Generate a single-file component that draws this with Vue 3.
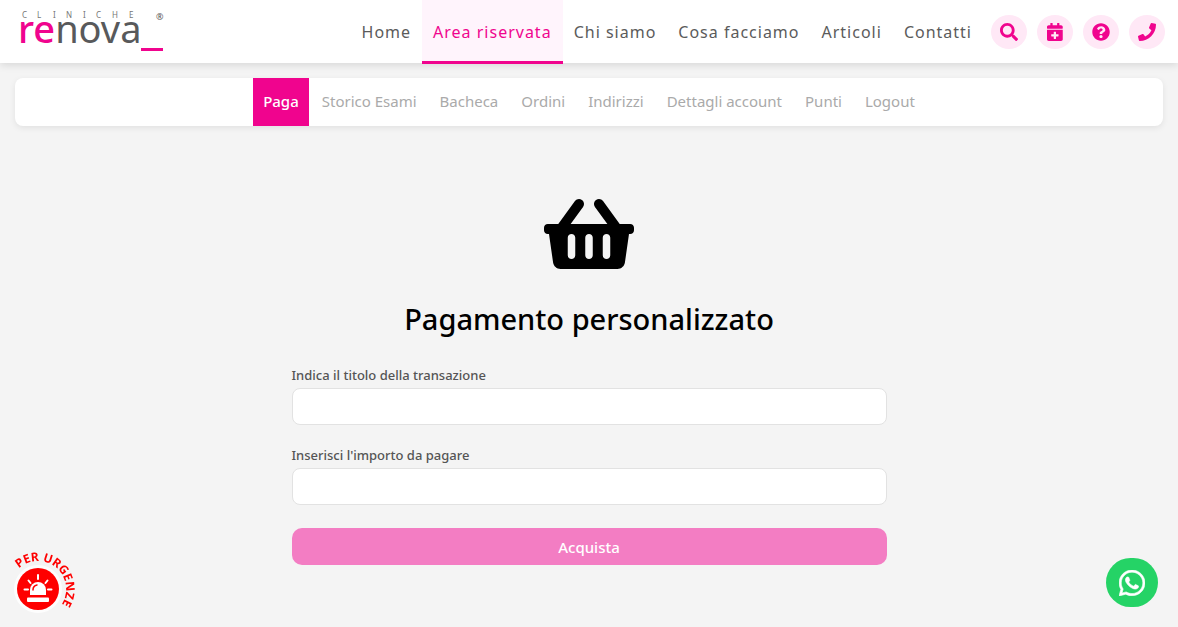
<script setup>
import { ref } from 'vue'

const title = ref('')
const amount = ref('')

const mainMenu = ['Home', 'Area riservata', 'Chi siamo', 'Cosa facciamo', 'Articoli', 'Contatti']
const accountMenu = ['Paga', 'Storico Esami', 'Bacheca', 'Ordini', 'Indirizzi', 'Dettagli account', 'Punti', 'Logout']

const actions = [
  { label: 'Cerca', box: '0 0 512 512', path: 'M505 442.7L405.3 343c-4.5-4.5-10.6-7-17-7H372c27.6-35.3 44-79.7 44-128C416 93.1 322.9 0 208 0S0 93.1 0 208s93.1 208 208 208c48.3 0 92.7-16.4 128-44v16.3c0 6.4 2.5 12.5 7 17l99.7 99.7c9.4 9.4 24.6 9.4 33.9 0l28.3-28.3c9.4-9.4 9.4-24.6.1-34zM208 336c-70.7 0-128-57.2-128-128 0-70.7 57.2-128 128-128 70.7 0 128 57.2 128 128 0 70.7-57.2 128-128 128z' },
  { label: 'Prenota', box: '0 0 448 512', path: 'M436 160H12c-6.6 0-12-5.4-12-12v-36c0-26.5 21.5-48 48-48h48V12c0-6.6 5.4-12 12-12h40c6.6 0 12 5.4 12 12v52h128V12c0-6.6 5.4-12 12-12h40c6.6 0 12 5.4 12 12v52h48c26.5 0 48 21.5 48 48v36c0 6.6-5.4 12-12 12zM12 192h424c6.6 0 12 5.4 12 12v260c0 26.5-21.5 48-48 48H48c-26.5 0-48-21.5-48-48V204c0-6.6 5.4-12 12-12zm316 140c0-6.6-5.4-12-12-12h-60v-60c0-6.6-5.4-12-12-12h-40c-6.6 0-12 5.4-12 12v60h-60c-6.6 0-12 5.4-12 12v40c0 6.6 5.4 12 12 12h60v60c0 6.6 5.4 12 12 12h40c6.6 0 12-5.4 12-12v-60h60c6.6 0 12-5.4 12-12v-40z' },
  { label: 'Aiuto', box: '0 0 512 512', path: 'M504 256c0 136.997-111.043 248-248 248S8 392.997 8 256C8 119.083 119.043 8 256 8s248 111.083 248 248zM262.655 90c-54.497 0-89.255 22.957-116.549 63.758-3.536 5.286-2.353 12.415 2.715 16.258l34.699 26.31c5.205 3.947 12.621 3.008 16.665-2.122 17.864-22.658 30.113-35.797 57.303-35.797 20.429 0 45.698 13.148 45.698 32.958 0 14.976-12.363 22.667-32.534 33.976C247.128 238.528 216 254.941 216 296v4c0 6.627 5.373 12 12 12h56c6.627 0 12-5.373 12-12v-1.333c0-28.462 83.186-29.647 83.186-106.667 0-58.002-60.165-102-116.531-102zM256 338c-25.365 0-46 20.635-46 46 0 25.364 20.635 46 46 46s46-20.636 46-46c0-25.365-20.635-46-46-46z' },
  { label: 'Telefono', box: '0 0 512 512', path: 'M493.4 24.6l-104-24c-11.3-2.6-22.9 3.3-27.5 13.9l-48 112c-4.2 9.8-1.4 21.3 6.9 28l60.6 49.6c-36 76.7-98.9 140.5-177.2 177.2l-49.6-60.6c-6.8-8.3-18.2-11.1-28-6.9l-112 48C3.9 366.5-2 378.1.6 389.4l24 104C27.1 504.2 36.7 512 48 512c256.1 0 464-207.5 464-464 0-11.2-7.7-20.9-18.6-23.4z' }
]
</script>

<template>
  <div class="page">
    <header class="topbar">
      <a class="logo" href="#" aria-label="Cliniche Renova">
        <svg width="150" height="48" viewBox="0 0 150 48">
          <text class="logo-small" x="5 20 36 49 66 79 95 112" y="10">CLINICHE</text>
          <text class="logo-mark" x="139" y="12">®</text>
          <text class="logo-name" x="1" y="35"><tspan class="logo-pink">re</tspan>nova</text>
          <rect x="124" y="40" width="22" height="3" fill="#f0048e" />
        </svg>
      </a>
      <nav class="main-menu" aria-label="Menu principale">
        <a v-for="item in mainMenu" :key="item" href="#" :class="{ active: item === 'Area riservata' }">{{ item }}</a>
      </nav>
      <div class="actions">
        <button v-for="action in actions" :key="action.label" type="button" :aria-label="action.label">
          <svg :viewBox="action.box" height="18"><path :d="action.path" fill="currentColor" /></svg>
        </button>
      </div>
    </header>

    <nav class="account-menu" aria-label="Area riservata">
      <a v-for="item in accountMenu" :key="item" href="#" :class="{ active: item === 'Paga' }">{{ item }}</a>
    </nav>

    <main class="payment">
      <svg class="basket" width="90" height="70" viewBox="0 32 576 448" aria-hidden="true">
        <path d="M576 216v16c0 13.255-10.745 24-24 24h-8l-26.113 182.788C514.509 462.435 494.257 480 470.37 480H105.63c-23.887 0-44.139-17.565-47.518-41.212L32 256h-8c-13.255 0-24-10.745-24-24v-16c0-13.255 10.745-24 24-24h67.341l106.78-146.821c10.395-14.292 30.407-17.453 44.701-7.058 14.293 10.395 17.453 30.408 7.058 44.701L170.477 192h235.046L326.12 82.821c-10.395-14.292-7.234-34.306 7.059-44.701 14.291-10.395 34.306-7.235 44.701 7.058L484.659 192H552c13.255 0 24 10.745 24 24zM312 392V280c0-13.255-10.745-24-24-24s-24 10.745-24 24v112c0 13.255 10.745 24 24 24s24-10.745 24-24zm112 0V280c0-13.255-10.745-24-24-24s-24 10.745-24 24v112c0 13.255 10.745 24 24 24s24-10.745 24-24zm-224 0V280c0-13.255-10.745-24-24-24s-24 10.745-24 24v112c0 13.255 10.745 24 24 24s24-10.745 24-24z" />
      </svg>
      <h1>Pagamento personalizzato</h1>
      <form @submit.prevent>
        <label for="pay-title">Indica il titolo della transazione</label>
        <input id="pay-title" v-model="title" type="text">
        <label for="pay-amount">Inserisci l'importo da pagare</label>
        <input id="pay-amount" v-model="amount" type="text">
        <button type="submit">Acquista</button>
      </form>
    </main>

    <a class="urgent" href="#" aria-label="Per urgenze">
      <svg width="80" height="80" viewBox="0 0 80 80">
        <defs><path id="urgent-arc" d="M19 21.500A28 28 0 1 1 38 70" /></defs>
        <circle cx="38" cy="42" r="24" fill="#fff" opacity=".8" />
        <circle cx="38" cy="42" r="21" fill="#fe0000" />
        <text><textPath href="#urgent-arc">PER URGENZE</textPath></text>
        <path d="M30 48v-5a8 8 0 0 1 16 0v5z" fill="#fff" />
        <path d="M33 43a5 5 0 0 1 4-5" fill="none" stroke="#fe0000" stroke-width="1.5" stroke-linecap="round" />
        <rect x="27" y="50.5" width="22" height="4.5" rx="1" fill="#fff" />
        <path d="M38 32v-4M30.5 36l-2-2.5M45.5 36l2-2.5M28 42.5h-3.5M48 42.5h3.5" stroke="#fff" stroke-width="2" stroke-linecap="round" />
      </svg>
    </a>

    <a class="whatsapp" href="#" aria-label="WhatsApp">
      <svg width="26" height="26" viewBox="0 32 448 448">
        <path fill="#fff" stroke="#fff" stroke-width="10" d="M380.9 97.1C339 55.1 283.2 32 223.9 32c-122.4 0-222 99.6-222 222 0 39.1 10.2 77.3 29.6 111L0 480l117.7-30.9c32.4 17.7 68.9 27 106.1 27h.1c122.3 0 224.1-99.6 224.1-222 0-59.3-25.2-115-67.1-157zm-157 341.6c-33.2 0-65.7-8.9-94-25.7l-6.7-4-69.8 18.3L72 359.2l-4.4-7c-18.5-29.4-28.2-63.3-28.2-98.2 0-101.7 82.8-184.5 184.6-184.5 49.3 0 95.6 19.2 130.4 54.1 34.8 34.9 56.2 81.2 56.1 130.5 0 101.8-84.9 184.6-186.6 184.6zm101.2-138.2c-5.5-2.8-32.8-16.2-37.9-18-5.1-1.9-8.8-2.8-12.5 2.8-3.7 5.6-14.3 18-17.6 21.8-3.2 3.7-6.5 4.2-12 1.4-32.6-16.3-54-29.1-75.5-66-5.7-9.8 5.7-9.1 16.3-30.3 1.8-3.7.9-6.9-.5-9.7-1.4-2.8-12.5-30.1-17.1-41.2-4.5-10.8-9.1-9.3-12.5-9.5-3.2-.2-6.9-.2-10.6-.2-3.7 0-9.7 1.4-14.8 6.9-5.1 5.6-19.4 19-19.4 46.3 0 27.3 19.9 53.7 22.6 57.4 2.8 3.7 39.1 59.7 94.8 83.8 35.2 15.2 49 16.5 66.6 13.9 10.7-1.6 32.8-13.4 37.4-26.4 4.6-13 4.6-24.1 3.2-26.4-1.3-2.5-5-3.9-10.5-6.6z" />
      </svg>
    </a>
  </div>
</template>

<style>
body {
  background: #f4f4f4;
}
</style>

<style scoped>
.page {
  font-family: "Noto Sans", "Open Sans", sans-serif;
  color: #555;
}

a {
  text-decoration: none;
}

.topbar {
  display: flex;
  height: 63px;
  padding: 0 13px 0 17px;
  background: #fff;
  box-shadow: 0 2px 8px rgba(0, 0, 0, 0.12);
}

.logo {
  margin-top: 8px;
  margin-right: auto;
}

.logo svg {
  display: block;
  overflow: visible;
}

.logo-small {
  font-size: 8px;
  fill: #777;
}

.logo-mark {
  font-size: 9px;
  fill: #555;
}

.logo-name {
  font-size: 38px;
  fill: #58595b;
}

.logo-pink {
  fill: #f0048e;
  font-weight: 500;
}

.main-menu {
  display: flex;
}

.main-menu a {
  height: 61px;
  padding: 0 11px;
  border-bottom: 3px solid transparent;
  color: #5b5b5b;
  font-size: 16px;
  line-height: 64px;
  letter-spacing: 1px;
  white-space: nowrap;
}

.main-menu a.active {
  border-color: #f0048e;
  background: #fff4fc;
  color: #f0048e;
}

.actions {
  display: flex;
  gap: 10px;
  margin-top: 15px;
  margin-left: 8px;
}

.actions button {
  display: flex;
  align-items: center;
  justify-content: center;
  width: 36px;
  height: 34px;
  padding: 0;
  border: 0;
  border-radius: 50%;
  background: #ffe8f6;
  color: #f0048e;
}

.account-menu {
  display: flex;
  justify-content: center;
  gap: 3px;
  margin: 15px 15px 0;
  border-radius: 8px;
  background: #fff;
  box-shadow: 0 2px 6px rgba(0, 0, 0, 0.08);
}

.account-menu a {
  padding: 0 10px 2px;
  color: #aaa;
  font-size: 15px;
  line-height: 46px;
  white-space: nowrap;
}

.account-menu a.active {
  background: #f0048e;
  color: #fff;
  font-weight: 500;
}

.payment {
  max-width: 595px;
  margin: 73px auto 0;
}

.basket {
  display: block;
  margin: 0 auto;
}

h1 {
  margin: 26px 0 24px;
  color: #000;
  font-size: 29px;
  font-weight: 500;
  line-height: 48px;
  text-align: center;
}

form {
  display: flex;
  flex-direction: column;
}

label {
  margin-bottom: 5px;
  font-size: 13px;
  font-weight: 500;
  line-height: 16px;
}

input {
  box-sizing: border-box;
  height: 37px;
  margin: 0 0 22px;
  padding: 0 12px;
  border: 1px solid #e2e2e2;
  border-radius: 8px;
  background: #fff;
  font: inherit;
}

form button {
  height: 37px;
  margin-top: 1px;
  border: 0;
  border-radius: 10px;
  background: #f37dc3;
  color: #fff;
  font-family: inherit;
  font-size: 15px;
  font-weight: 500;
}

.urgent {
  position: fixed;
  left: 0;
  bottom: 0;
}

.urgent svg {
  display: block;
}

.urgent text {
  fill: #fe0000;
  font-size: 12px;
  font-weight: 700;
}

.whatsapp {
  position: fixed;
  right: 20px;
  bottom: 20px;
  display: flex;
  align-items: center;
  justify-content: center;
  width: 52px;
  height: 49px;
  border-radius: 25px;
  background: #25d366;
}
</style>
